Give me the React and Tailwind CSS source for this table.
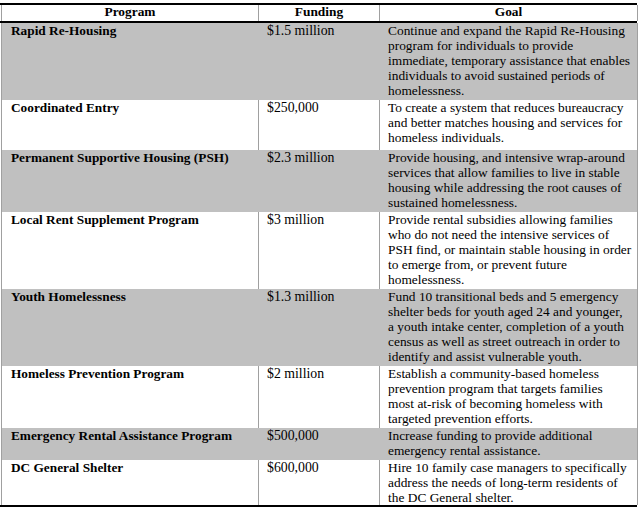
import React from "react";

const rows = [
  { p: "Rapid Re-Housing", f: "$1.5 million", g: ["Continue and expand the Rapid Re-Housing", "program for individuals to provide", "immediate, temporary assistance that enables", "individuals to avoid sustained periods of", "homelessness."], gray: true, h: "h-[77px]" },
  { p: "Coordinated Entry", f: "$250,000", g: ["To create a system that reduces bureaucracy", "and better matches housing and services for", "homeless individuals."], gray: false, h: "h-[50px]" },
  { p: "Permanent Supportive Housing (PSH)", f: "$2.3 million", g: ["Provide housing, and intensive wrap-around", "services that allow families to live in stable", "housing while addressing the root causes of", "sustained homelessness."], gray: true, h: "h-[62px]" },
  { p: "Local Rent Supplement Program", f: "$3 million", g: ["Provide rental subsidies allowing families", "who do not need the intensive services of", "PSH find, or maintain stable housing in order", "to emerge from, or prevent future", "homelessness."], gray: false, h: "h-[77px]" },
  { p: "Youth Homelessness", f: "$1.3 million", g: ["Fund 10 transitional beds and 5 emergency", "shelter beds for youth aged 24 and younger,", "a youth intake center, completion of a youth", "census as well as street outreach in order to", "identify and assist vulnerable youth."], gray: true, h: "h-[77px]" },
  { p: "Homeless Prevention Program", f: "$2 million", g: ["Establish a community-based homeless", "prevention program that targets families", "most at-risk of becoming homeless with", "targeted prevention efforts."], gray: false, h: "h-[62px]" },
  { p: "Emergency Rental Assistance Program", f: "$500,000", g: ["Increase funding to provide additional", "emergency rental assistance."], gray: true, h: "h-[32px]" },
  { p: "DC General Shelter", f: "$600,000", g: ["Hire 10 family case managers to specifically", "address the needs of long-term residents of", "the DC General shelter."], gray: false, h: "h-[45px]" },
];

export default function App() {
  return (
    <div className="w-[640px] h-[512px] bg-white pt-[3px] text-black font-['Liberation_Serif','Times_New_Roman',serif]">
      <div className="w-[637px] border-t-2 border-b-2 border-black">
        <div className="grid grid-cols-[257px_121px_259px] h-[18px] border-b-2 border-black pl-[1px] text-[13.4px] leading-[14px] font-bold">
          <div className="border-l border-[#a0a0a0] text-center">Program</div>
          <div className="border-l border-[#a0a0a0] text-center">Funding</div>
          <div className="border-l border-r border-[#a0a0a0] text-center">Goal</div>
        </div>
        {rows.map((r, i) => {
          const line = r.gray ? "border-[#c0c0c0]" : "border-[#a0a0a0]";
          return (
            <div key={i} className={`grid grid-cols-[257px_121px_259px] ${r.h} pl-[1px]`}>
              <div className={`border-l border-[#a0a0a0] ${r.gray ? "bg-[#c0c0c0]" : "bg-white"} pl-[9px] text-[13.3px] leading-[15px] font-bold whitespace-nowrap`}>{r.p}</div>
              <div className={`border-l ${line} ${r.gray ? "bg-[#c0c0c0]" : "bg-white"} pl-[8px] text-[13.8px] leading-[15px] whitespace-nowrap`}>{r.f}</div>
              <div className={`border-l ${line} border-r border-r-[#a0a0a0] ${r.gray ? "bg-[#c0c0c0]" : "bg-white"} pl-[8px] text-[13.4px] leading-[15px] whitespace-nowrap flex flex-col`}>
                {r.g.map((t, j) => (
                  <span key={j}>{t}</span>
                ))}
              </div>
            </div>
          );
        })}
      </div>
    </div>
  );
}
